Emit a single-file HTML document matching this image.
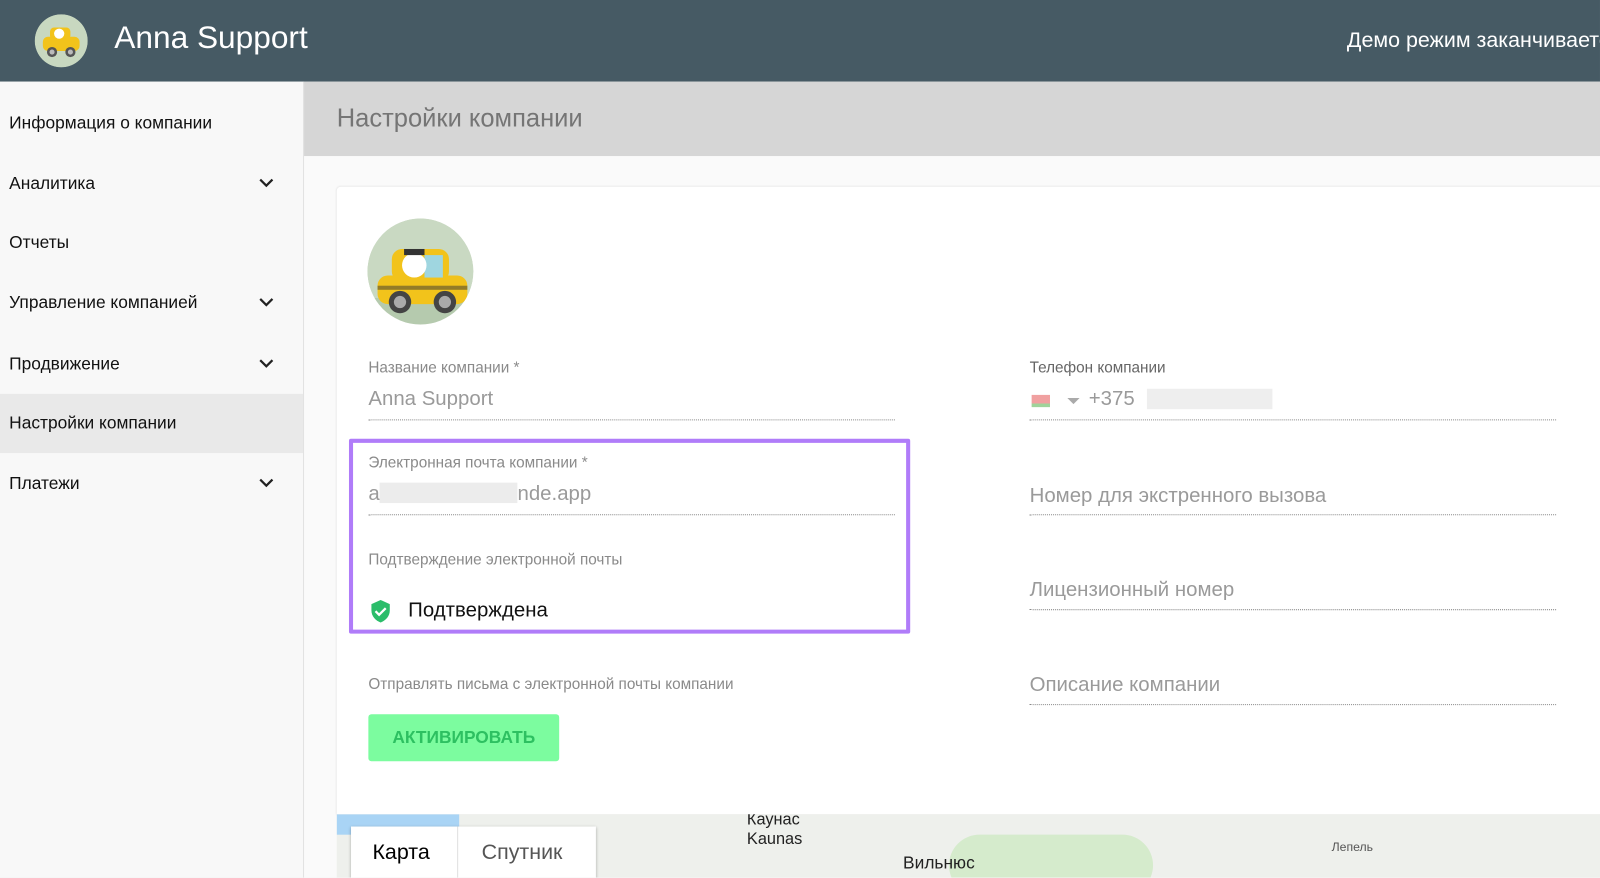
<!DOCTYPE html>
<html><head><meta charset="utf-8"><style>
*{margin:0;padding:0;box-sizing:border-box}
body{width:1600px;height:877px;overflow:hidden;font-family:"Liberation Sans",sans-serif;background:#f5f5f5;position:relative}
#w{position:absolute;left:0;top:0;width:1568px;height:860px;transform:scale(1.0204);transform-origin:0 0;overflow:hidden}
.hdr{position:absolute;left:0;top:0;width:1568px;height:80px;background:#465a64;color:#fff}
.hdr .t{position:absolute;left:112px;top:19px;font-size:31px}
.hdr .d{position:absolute;left:1320px;top:28px;font-size:21px;white-space:nowrap}
.side{position:absolute;left:0;top:80px;width:298px;height:797px;background:#f8f8f8;border-right:1px solid #e0e0e0}
.it{position:absolute;left:9px;font-size:17px;color:#111}
.chev{position:absolute;left:253px;width:16px;height:10px}
.act{position:absolute;left:0;top:306px;width:297px;height:58px;background:#e9e9e9}
.tb{position:absolute;left:298px;top:80px;width:1302px;height:73px;background:#d6d6d6}
.tb span{position:absolute;left:32px;top:22px;font-size:25px;color:#757575}
.main{position:absolute;left:298px;top:153px;width:1302px;height:724px;background:#fafafa}
.card{position:absolute;left:330px;top:183px;width:1270px;height:615px;background:#fff;border-radius:4px 0 0 0;box-shadow:0 0 2px rgba(0,0,0,.12)}
.lbl{position:absolute;font-size:15px;color:#8a8a8a}
.val{position:absolute;font-size:20px;color:#9a9a9a}
.ph{position:absolute;font-size:20px;color:#9a9a9a}
.ln{position:absolute;height:0;border-bottom:1px dotted #888;width:516px}
.map{position:absolute;left:330px;top:798px;width:1270px;height:79px;background:#eef0ec;overflow:hidden}
</style></head><body><div id="w">
<div class="hdr">
<svg style="position:absolute;left:34px;top:14px" width="52" height="52" viewBox="0 0 52 52"><clipPath id="c1"><circle cx="26" cy="26" r="26"/></clipPath><g clip-path="url(#c1)"><circle cx="26" cy="26" r="26" fill="#c8d8c0"/><rect x="8" y="22" width="36" height="14" rx="5" fill="#f2c31b"/><rect x="15" y="13" width="20" height="12" rx="4" fill="#f2c31b"/><circle cx="24" cy="19" r="5" fill="#fff"/><circle cx="17" cy="37" r="5" fill="#555"/><circle cx="35" cy="37" r="5" fill="#555"/><circle cx="17" cy="37" r="2.5" fill="#bbb"/><circle cx="35" cy="37" r="2.5" fill="#bbb"/></g></svg>
<div class="t">Anna Support</div>
<div class="d">Демо режим заканчивается</div>
</div>
<div class="side">
<div class="act"></div>
<div class="it" style="top:31px">Информация о компании</div>
<div class="it" style="top:90px">Аналитика</div>
<div class="it" style="top:148px">Отчеты</div>
<div class="it" style="top:207px">Управление компанией</div>
<div class="it" style="top:267px">Продвижение</div>
<div class="it" style="top:325px">Настройки компании</div>
<div class="it" style="top:384px">Платежи</div>
<svg class="chev" style="top:94px" viewBox="0 0 16 10"><path d="M2 2l6 6 6-6" stroke="#222" stroke-width="2.2" fill="none"/></svg>
<svg class="chev" style="top:211px" viewBox="0 0 16 10"><path d="M2 2l6 6 6-6" stroke="#222" stroke-width="2.2" fill="none"/></svg>
<svg class="chev" style="top:271px" viewBox="0 0 16 10"><path d="M2 2l6 6 6-6" stroke="#222" stroke-width="2.2" fill="none"/></svg>
<svg class="chev" style="top:388px" viewBox="0 0 16 10"><path d="M2 2l6 6 6-6" stroke="#222" stroke-width="2.2" fill="none"/></svg>
</div>
<div class="tb"><span>Настройки компании</span></div>
<div class="main"></div>
<div class="card"></div>
<svg style="position:absolute;left:360px;top:214px" width="104" height="104" viewBox="0 0 104 104"><clipPath id="c2"><circle cx="52" cy="52" r="52"/></clipPath><g clip-path="url(#c2)"><circle cx="52" cy="52" r="52" fill="#c9d9c2"/><rect x="0" y="78" width="104" height="26" fill="#a9bfa0" opacity=".6"/><rect x="10" y="56" width="88" height="28" rx="10" fill="#f2c31b"/><rect x="24" y="30" width="56" height="32" rx="10" fill="#f2c31b"/><rect x="56" y="36" width="18" height="22" fill="#9fd6e0"/><circle cx="46" cy="46" r="12" fill="#fff"/><rect x="36" y="30" width="20" height="6" fill="#333"/><rect x="10" y="66" width="88" height="4" fill="#333" opacity=".5"/><circle cx="32" cy="82" r="11" fill="#444"/><circle cx="76" cy="82" r="11" fill="#444"/><circle cx="32" cy="82" r="6" fill="#aaa"/><circle cx="76" cy="82" r="6" fill="#aaa"/></g></svg>

<div class="lbl" style="left:361px;top:352px">Название компании *</div>
<div class="val" style="left:361px;top:380px">Anna Support</div>
<div class="ln" style="left:361px;top:411px"></div>

<div class="lbl" style="left:1009px;top:352px;color:#666">Телефон компании</div>
<div style="position:absolute;left:1011px;top:387px;width:18px;height:12px;background:linear-gradient(#f0a0a0 70%,#9fd39a 70%)"></div>
<div style="position:absolute;left:1046px;top:390px;border:6px solid transparent;border-top:6px solid #aaa"></div>
<div class="val" style="left:1067px;top:380px">+375</div>
<div style="position:absolute;left:1124px;top:381px;width:123px;height:20px;background:#eee"></div>
<div class="ln" style="left:1009px;top:411px"></div>

<div style="position:absolute;left:342px;top:430px;width:550px;height:191px;border:4px solid #b07cf9;border-radius:2px"></div>
<div class="lbl" style="left:361px;top:445px">Электронная почта компании *</div>
<div class="val" style="left:361px;top:473px">a<span style="display:inline-block;width:135px;height:20px;background:#ececec;vertical-align:-3px"></span>nde.app</div>
<div class="ln" style="left:361px;top:504px"></div>
<div class="lbl" style="left:361px;top:540px">Подтверждение электронной почты</div>
<svg style="position:absolute;left:363px;top:587px" width="20" height="24" viewBox="0 0 20 24"><path d="M10 1L1 5v6c0 6 4 10 9 12 5-2 9-6 9-12V5z" fill="#2bbd6a"/><path d="M5 12l3.5 3.5L15 9" stroke="#fff" stroke-width="2.2" fill="none"/></svg>
<div style="position:absolute;left:400px;top:587px;font-size:20px;color:#111">Подтверждена</div>

<div class="ph" style="left:1009px;top:475px">Номер для экстренного вызова</div>
<div class="ln" style="left:1009px;top:504px"></div>
<div class="ph" style="left:1009px;top:567px">Лицензионный номер</div>
<div class="ln" style="left:1009px;top:597px"></div>
<div class="ph" style="left:1009px;top:660px">Описание компании</div>
<div class="ln" style="left:1009px;top:690px"></div>

<div class="lbl" style="left:361px;top:662px">Отправлять письма с электронной почты компании</div>
<div style="position:absolute;left:361px;top:700px;width:187px;height:46px;background:#7cfc9f;border-radius:3px;color:#2dc061;font-weight:bold;font-size:17px;text-align:center;line-height:46px">АКТИВИРОВАТЬ</div>

<div class="map">
<div style="position:absolute;left:0;top:0;width:120px;height:20px;background:#a9d4f5"></div>
<div style="position:absolute;left:600px;top:20px;width:200px;height:60px;background:#d5ebcc;border-radius:40px"></div>
<div style="position:absolute;left:402px;top:-4px;font-size:16px;color:#222;line-height:19px">Каунас<br>Kaunas</div>
<div style="position:absolute;left:555px;top:38px;font-size:17px;color:#222">Вильнюс</div>
<div style="position:absolute;left:975px;top:25px;font-size:12px;color:#555">Лепель</div>
<div style="position:absolute;left:14px;top:12px;width:240px;height:70px;background:#fff;box-shadow:0 1px 3px rgba(0,0,0,.3)"></div>
<div style="position:absolute;left:118px;top:12px;width:1px;height:70px;background:#e0e0e0"></div>
<div style="position:absolute;left:35px;top:26px;font-size:21px;color:#000">Карта</div>
<div style="position:absolute;left:142px;top:26px;font-size:21px;color:#555">Спутник</div>
</div>
</div></body></html>
